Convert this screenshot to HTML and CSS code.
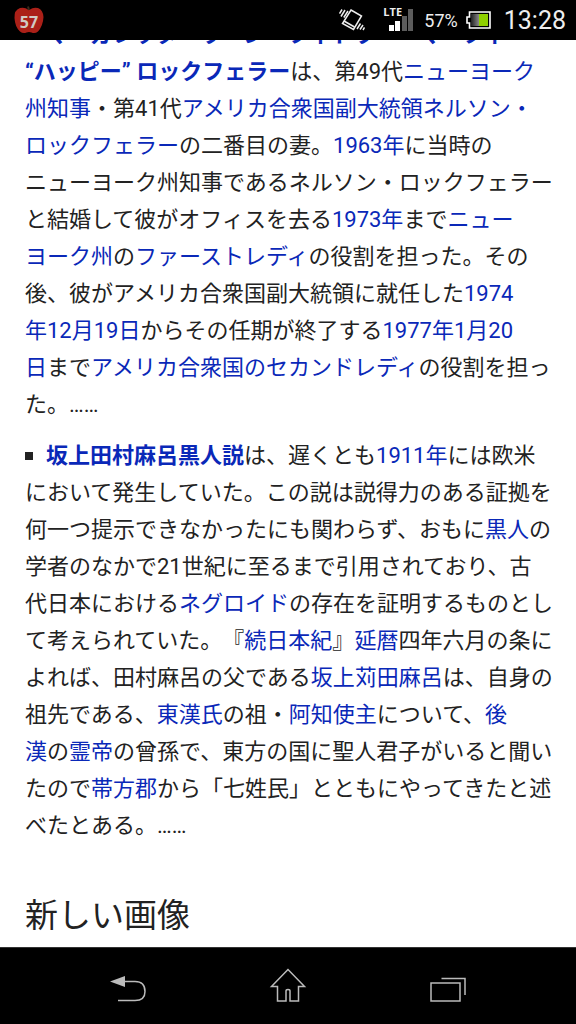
FILE: index.html
```html
<!DOCTYPE html>
<html lang="ja">
<head>
<meta charset="utf-8">
<meta name="viewport" content="width=device-width, initial-scale=1">
<title>新しい画像</title>
<link rel="stylesheet" href="styles.css">
</head>
<body>
<header class="status">
  <div class="badge">
    <svg class="badge-shape" viewBox="0 0 30 28" aria-hidden="true"><path d="M14 3.500Q11 1 6 2Q0 4 .500 12Q1 21 6 25.500Q9 28 12.500 26.500Q15 25.500 17.500 26.500Q21 28 24 25.500Q29 20 29.500 11Q29 4 24 2Q19 1 16 3.500L15 4Z" fill="#ab2018"/><path d="M15 4L14 .500" stroke="#3a2a1c" stroke-width="2"/></svg>
    <span class="badge-count">57</span>
  </div>
  <div class="status-right">
    <svg class="vibrate" viewBox="0 0 26 24" aria-hidden="true" fill="none" stroke="#eee" stroke-width="1.500"><path d="M12 2L22.500 8L14.500 21.500L3.500 15.500Z"/><path d="M5 13L15.500 19"/><path d="M2 8.500L6 2M4.800 9.500L9 3M.500 5.500L3 1.500M18 21L21.500 15.500M21 21.500L24 17M24 22L25.500 19.500"/></svg>
    <div class="signal">
      <svg viewBox="0 0 32 26" aria-hidden="true"><path fill="#fff" d="M6 18h5v6H6zM12 14h5v10h-5z"/><path fill="#5c5c5c" d="M19 9h5v15h-5zM25 2h5v22h-5z"/></svg>
      <span class="lte">LTE</span>
    </div>
    <span class="percent">57%</span>
    <svg class="battery" viewBox="0 0 25 18" aria-hidden="true"><defs><linearGradient id="charge"><stop offset="0" stop-color="#222"/><stop offset="1" stop-color="#888"/></linearGradient></defs><path d="M3.500 1H24V17H3.500V12H1V6H3.500Z" fill="#000" stroke="#fff" stroke-width="1.600"/><path d="M5 3h8v12H5z" fill="url(#charge)"/><path d="M13 3h9v12h-9z" fill="#8fd000"/></svg>
    <time class="clock">13:28</time>
  </div>
</header>

<main class="page">
  <ul class="topics">
    <li><b><a href="#">マーガレッタ・ラージ・フィトラー・マーフィー<br>
“ハッピー” ロックフェラー</a></b>は、第49代<a href="#">ニューヨーク<br>
州知事</a>・第41代<a href="#">アメリカ合衆国副大統領</a><a href="#">ネルソン・<br>
ロックフェラー</a>の二番目の妻。<a href="#">1963年</a>に当時の<br>
ニューヨーク州知事であるネルソン・ロックフェラー<br>
と結婚して彼がオフィスを去る<a href="#">1973年</a>まで<a href="#">ニュー<br>
ヨーク州</a>の<a href="#">ファーストレディ</a>の役割を担った。その<br>
後、彼がアメリカ合衆国副大統領に就任した<a href="#">1974<br>
年12月19日</a>からその任期が終了する<a href="#">1977年1月20<br>
日</a>まで<a href="#">アメリカ合衆国のセカンドレディ</a>の役割を担っ<br>
た。……</li>
    <li><b><a href="#">坂上田村麻呂黒人説</a></b>は、遅くとも<a href="#">1911年</a>には欧米<br>
において発生していた。この説は説得力のある証拠を<br>
何一つ提示できなかったにも関わらず、おもに<a href="#">黒人</a>の<br>
学者のなかで21世紀に至るまで引用されており、古<br>
代日本における<a href="#">ネグロイド</a>の存在を証明するものとし<br>
て考えられていた。『<a href="#">続日本紀</a>』<a href="#">延暦</a>四年六月の条に<br>
よれば、田村麻呂の父である<a href="#">坂上苅田麻呂</a>は、自身の<br>
祖先である、<a href="#">東漢氏</a>の祖・<a href="#">阿知使主</a>について、<a href="#">後<br>
漢</a>の<a href="#">霊帝</a>の曾孫で、東方の国に聖人君子がいると聞い<br>
たので<a href="#">帯方郡</a>から「七姓民」とともにやってきたと述<br>
べたとある。……</li>
  </ul>
  <h2 class="heading">新しい画像</h2>
</main>

<nav class="navbar" aria-label="システム">
  <button class="nav-button" aria-label="戻る"><svg width="40" height="40" viewBox="0 0 40 40" fill="none" stroke="#bbb" stroke-width="1.500"><path d="M14 14.500H27Q37 14.500 37 24.500Q37 33.500 27 33.500H10"/><path d="M2 14.500L17 9V20Z" fill="#bbb" stroke="none"/></svg></button>
  <button class="nav-button" aria-label="ホーム"><svg width="40" height="40" viewBox="0 0 40 40" fill="none" stroke="#bbb" stroke-width="1.500"><path d="M20 2.500L3.500 19.500H9.500V34H18V24Q18 22.500 20 22.500Q22 22.500 22 24V34H30.500V19.500H36.500Z"/></svg></button>
  <button class="nav-button" aria-label="最近使ったアプリ"><svg width="40" height="40" viewBox="0 0 40 40" fill="none" stroke="#bbb" stroke-width="1.500"><path d="M3 16H32V34H3ZM13.500 11.500H37V28"/></svg></button>
</nav>
</body>
</html>
```
FILE: styles.css
```css
* {
  box-sizing: border-box;
}

body {
  margin: 0;
  height: 100vh;
  overflow: hidden;
  background: #fff;
  color: #222;
  font-family: Roboto, "Noto Sans CJK JP", sans-serif;
  text-spacing-trim: space-all;
}

.status {
  position: fixed;
  inset: 0 0 auto;
  z-index: 1;
  display: flex;
  align-items: center;
  justify-content: space-between;
  height: 40px;
  padding: 0 10px 0 14px;
  background: #000;
  color: #eee;
}

.badge {
  display: grid;
  place-items: center;
}

.badge-shape,
.badge-count {
  grid-area: 1 / 1;
}

.badge-shape {
  width: 30px;
  height: 28px;
}

.badge-count {
  padding-top: 4px;
  color: #d0cbc4;
  font: bold 16px/20px "Open Sans", sans-serif;
}

.status-right {
  display: flex;
  align-items: center;
}

.vibrate {
  width: 26px;
  height: 24px;
  margin-right: 18px;
}

.signal {
  position: relative;
  width: 32px;
  height: 26px;
  margin-right: 9px;
}

.lte {
  position: absolute;
  top: 0;
  left: 0;
  font: bold 11px/10px "Open Sans", sans-serif;
}

.percent {
  margin-right: 8px;
  font-size: 18px;
}

.battery {
  width: 25px;
  height: 18px;
  margin-right: 13px;
}

.clock {
  font-size: 25px;
}

.page {
  padding: 16px 20px 0 25px;
}

.topics {
  margin: 0;
  padding: 0;
  list-style: none;
  font-size: 22px;
  line-height: 37px;
  white-space: nowrap;
}

.topics li + li {
  margin-top: 14px;
}

.topics li::before {
  content: "";
  display: inline-block;
  width: 8px;
  height: 8px;
  margin-right: 13px;
  vertical-align: 3px;
  background: #222;
}

.topics a {
  color: #0a28b8;
  text-decoration: none;
}

.heading {
  margin: 52px 0 0;
  font-size: 33px;
  font-weight: 400;
  line-height: 40px;
}

.navbar {
  position: fixed;
  inset: auto 0 0;
  display: flex;
  justify-content: center;
  gap: 120px;
  height: 77px;
  padding-top: 19px;
  border-top: 1px solid #333;
  background: #000;
}

.nav-button {
  width: 40px;
  height: 40px;
  padding: 0;
  border: 0;
  background: none;
}
```
